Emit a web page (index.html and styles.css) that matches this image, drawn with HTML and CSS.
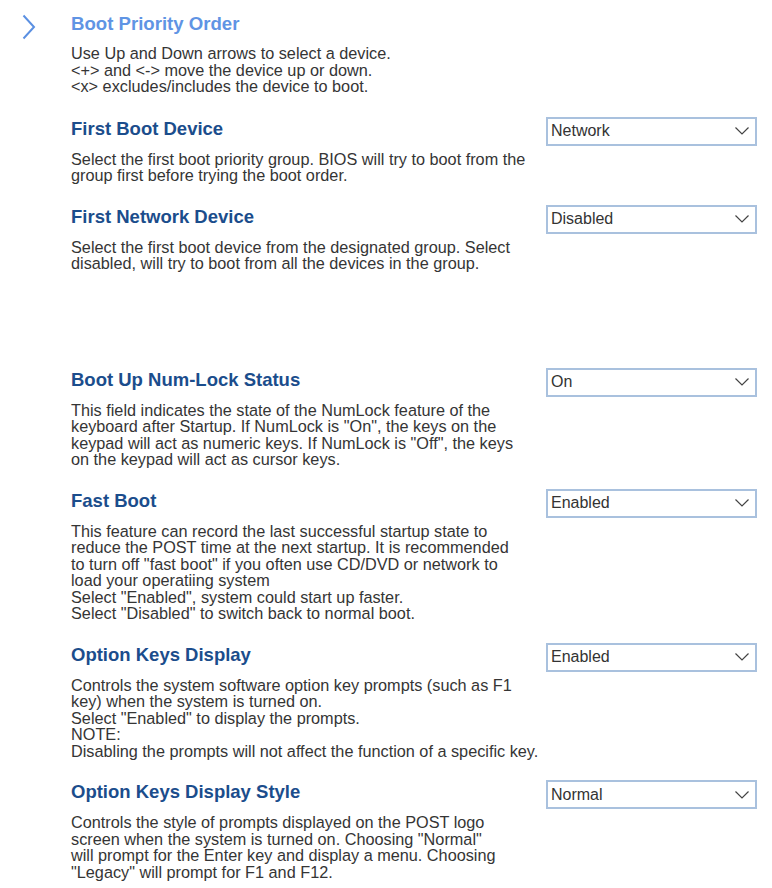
FILE: index.html
```html
<!DOCTYPE html>
<html lang="en">
<head>
<meta charset="utf-8">
<title>Boot Priority Order</title>
<link rel="stylesheet" href="styles.css">
</head>
<body>
<div class="page">
  <div class="intro">
    <div class="intro-icon">
      <svg class="chevron" width="16" height="26" viewBox="0 0 16 26"><path d="M2.5 1.5 L13 13 L2.5 24.5" fill="none" stroke="#5b90e2" stroke-width="2"/></svg>
    </div>
    <div class="intro-body">
      <h1 class="title">Boot Priority Order</h1>
      <p class="desc">Use Up and Down arrows to select a device.<br>&lt;+&gt; and &lt;-&gt; move the device up or down.<br>&lt;x&gt; excludes/includes the device to boot.</p>
    </div>
  </div>

  <div class="settings">
    <div class="setting">
      <div class="setting-text">
        <h2 class="name">First Boot Device</h2>
        <p class="desc">Select the first boot priority group. BIOS will try to boot from the<br>group first before trying the boot order.</p>
      </div>
      <div class="select"><span class="value">Network</span><svg class="caret" width="14" height="8" viewBox="0 0 14 8"><path d="M0.5 0.5 L7 7 L13.5 0.5" fill="none" stroke="#444" stroke-width="1.2"/></svg></div>
    </div>

    <div class="setting">
      <div class="setting-text">
        <h2 class="name">First Network Device</h2>
        <p class="desc">Select the first boot device from the designated group. Select<br>disabled, will try to boot from all the devices in the group.</p>
      </div>
      <div class="select"><span class="value">Disabled</span><svg class="caret" width="14" height="8" viewBox="0 0 14 8"><path d="M0.5 0.5 L7 7 L13.5 0.5" fill="none" stroke="#444" stroke-width="1.2"/></svg></div>
    </div>

    <div class="spacer"></div>

    <div class="setting">
      <div class="setting-text">
        <h2 class="name">Boot Up Num-Lock Status</h2>
        <p class="desc">This field indicates the state of the NumLock feature of the<br>keyboard after Startup. If NumLock is "On", the keys on the<br>keypad will act as numeric keys. If NumLock is "Off", the keys<br>on the keypad will act as cursor keys.</p>
      </div>
      <div class="select"><span class="value">On</span><svg class="caret" width="14" height="8" viewBox="0 0 14 8"><path d="M0.5 0.5 L7 7 L13.5 0.5" fill="none" stroke="#444" stroke-width="1.2"/></svg></div>
    </div>

    <div class="setting">
      <div class="setting-text">
        <h2 class="name">Fast Boot</h2>
        <p class="desc">This feature can record the last successful startup state to<br>reduce the POST time at the next startup. It is recommended<br>to turn off "fast boot" if you often use CD/DVD or network to<br>load your operatiing system<br>Select "Enabled", system could start up faster.<br>Select "Disabled" to switch back to normal boot.</p>
      </div>
      <div class="select"><span class="value">Enabled</span><svg class="caret" width="14" height="8" viewBox="0 0 14 8"><path d="M0.5 0.5 L7 7 L13.5 0.5" fill="none" stroke="#444" stroke-width="1.2"/></svg></div>
    </div>

    <div class="setting">
      <div class="setting-text">
        <h2 class="name">Option Keys Display</h2>
        <p class="desc">Controls the system software option key prompts (such as F1<br>key) when the system is turned on.<br>Select "Enabled" to display the prompts.<br>NOTE:<br>Disabling the prompts will not affect the function of a specific key.</p>
      </div>
      <div class="select"><span class="value">Enabled</span><svg class="caret" width="14" height="8" viewBox="0 0 14 8"><path d="M0.5 0.5 L7 7 L13.5 0.5" fill="none" stroke="#444" stroke-width="1.2"/></svg></div>
    </div>

    <div class="setting">
      <div class="setting-text">
        <h2 class="name">Option Keys Display Style</h2>
        <p class="desc">Controls the style of prompts displayed on the POST logo<br>screen when the system is turned on. Choosing "Normal"<br>will prompt for the Enter key and display a menu. Choosing<br>"Legacy" will prompt for F1 and F12.</p>
      </div>
      <div class="select"><span class="value">Normal</span><svg class="caret" width="14" height="8" viewBox="0 0 14 8"><path d="M0.5 0.5 L7 7 L13.5 0.5" fill="none" stroke="#444" stroke-width="1.2"/></svg></div>
    </div>
  </div>
</div>
</body>
</html>
```

FILE: styles.css
```css
* { box-sizing: border-box; }

body {
  margin: 0;
  background: #ffffff;
  font-family: "Liberation Sans", Arial, sans-serif;
  color: #333333;
}

.page {
  width: 772px;
}

.intro {
  display: flex;
  padding-top: 13px;
}

.intro-icon {
  width: 71px;
  flex: none;
}

.chevron {
  display: block;
  margin-left: 21px;
  margin-top: 1px;
}

.title {
  margin: 0;
  font-size: 18.6px;
  line-height: 22px;
  font-weight: bold;
  color: #5f94e4;
}

.desc {
  margin: 0;
  font-size: 16.25px;
  line-height: 16.5px;
  color: #353535;
}

.intro-body .desc {
  margin-top: 10px;
}

.settings {
  padding-left: 71px;
  margin-top: 22px;
  width: 757px;
}

.setting {
  display: flex;
  justify-content: space-between;
  align-items: flex-start;
  margin-bottom: 21px;
}

.setting-text {
  width: 475px;
}

.name {
  margin: 0 0 10px;
  font-size: 18.5px;
  line-height: 24px;
  font-weight: bold;
  color: #1b4d8c;
}

.spacer {
  height: 75px;
}

.select {
  width: 211px;
  height: 29px;
  flex: none;
  border: 2px solid #a9c1de;
  background: #ffffff;
  display: flex;
  align-items: center;
  justify-content: space-between;
  padding: 0 6px 0 3px;
  font-size: 16px;
  color: #333333;
}

.caret {
  display: block;
}
```
